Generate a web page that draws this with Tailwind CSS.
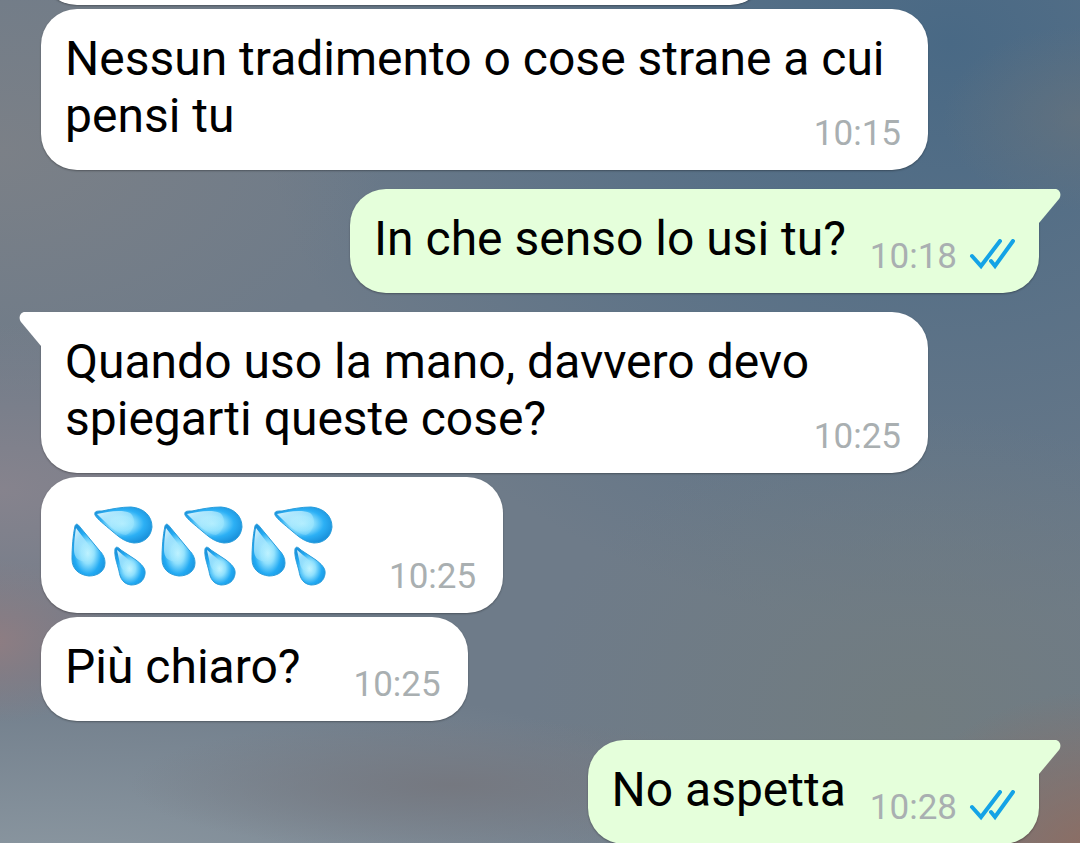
<!DOCTYPE html>
<html lang="it">
<head>
<meta charset="utf-8">
<meta name="viewport" content="width=device-width, initial-scale=1">
<title>Chat</title>
<script src="https://cdn.jsdelivr.net/npm/@tailwindcss/browser@4"></script>
</head>
<body class="min-h-screen overflow-hidden bg-[#6e7b89] font-['Roboto',sans-serif] text-black bg-[radial-gradient(ellipse_at_100%_14%,#6c747a90_0%,#6c747a00_9%),radial-gradient(ellipse_at_102%_102%,#8f6c60_0%,#8f6c6000_14%),radial-gradient(ellipse_at_-1%_76%,#8f7d82_0%,#8f7d8200_9%),radial-gradient(ellipse_30%_8%_at_42%_93%,#757880_0%,#75788000_100%),radial-gradient(ellipse_70%_26%_at_5%_105%,#8e9aa3_0%,#8e9aa300_100%),radial-gradient(ellipse_at_0%_58%,#86838d_0%,#86838d00_24%),radial-gradient(ellipse_at_85%_85%,#717c80_0%,#717c8000_30%),radial-gradient(ellipse_at_0%_18%,#7b8087_0%,#7b808700_25%),radial-gradient(ellipse_at_88%_5%,#496985_0%,#51698200_52%)]">
<!-- Shapes shared by the messages -->
<svg class="absolute size-0" aria-hidden="true">
  <defs>
    <radialGradient id="water-top" cx="0.48" cy="0.46" r="0.56">
      <stop offset="0" stop-color="#b5effe"/>
      <stop offset="0.35" stop-color="#8fe0fd"/>
      <stop offset="0.68" stop-color="#2cb0f5"/>
      <stop offset="1" stop-color="#1b93dd"/>
    </radialGradient>
    <radialGradient id="water" cx="0.48" cy="0.56" r="0.58">
      <stop offset="0" stop-color="#c9f6ff"/>
      <stop offset="0.35" stop-color="#8fe0fd"/>
      <stop offset="0.7" stop-color="#22aaf3"/>
      <stop offset="1" stop-color="#1b93dd"/>
    </radialGradient>
    <linearGradient id="shine" x1="0" y1="0" x2="0.7" y2="0.8">
      <stop offset="0" stop-color="#e4f9ff"/>
      <stop offset="1" stop-color="#a5e9fe" stop-opacity="0.3"/>
    </linearGradient>
    <symbol id="drops" viewBox="-1 -2 90 90">
      <g stroke="#2a9edc" stroke-width="1">
        <path fill="url(#water-top)" d="M26 16C25 12 28 12 33 12C43 10 52 8 62 8C75 9 83 17 83 28C82 38 75 44 65 44C55 43 49 37 43 32C36 26 28 20 26 16Z"/>
        <path fill="url(#water)" d="M6 27C7 24 9 25 11 28L30 51C34 55 36 59 36 64C36 72 29 77 20 77C10 76 3 70 3 60C3 49 4 36 6 27Z"/>
        <path fill="url(#water)" d="M46 50C47 47 49 48 52 51L67 61C72 65 77 69 76 75C75 82 70 86 62 86C54 85 51 79 50 72C48 64 45 57 46 50Z"/>
      </g>
      <g fill="url(#shine)">
        <path d="M28 15C38 13 52 10 61 14C68 19 65 33 57 36C49 36 37 24 28 15Z"/>
        <path d="M7 29L23 50C27 55 24 61 17 62C9 63 5 58 5 51C5 43 6 35 7 29Z"/>
        <path d="M48 51L60 61C65 65 64 70 60 71C54 73 52 69 51 65Z"/>
      </g>
    </symbol>
    <symbol id="ticks" viewBox="0 0 46 36">
      <path d="M3 17L12 27L31 2M22 22L26 27L44 2" fill="none" stroke="#14a3e6" stroke-width="4" stroke-linejoin="miter" stroke-linecap="round"/>
    </symbol>
    <symbol id="tail" viewBox="0 0 22 34">
      <path d="M0 0H16C21 0 23 6 20 10L0 34Z"/>
    </symbol>
  </defs>
</svg>
<main class="flex flex-col items-start gap-1 px-[41px]">
  <div class="-mt-[67px] h-[72px] w-full max-w-[725px] rounded-[36px] bg-white shadow-[0_1px_2px_#00000050]"></div>

  <article class="grid w-full max-w-[887px] rounded-[36px] bg-white pt-[21px] pr-[27px] pb-[26px] pl-6 shadow-[0_1px_2px_#00000050]">
    <p class="col-start-1 row-start-1 text-[48px] leading-[57px]">Nessun tradimento o cose strane a cui pensi tu</p>
    <time class="col-start-1 row-start-1 -mb-2 self-end justify-self-end text-[35px] leading-9 text-[#a9afb1]">10:15</time>
  </article>

  <article class="relative mt-[15px] flex items-end gap-6 self-end rounded-[36px] rounded-tr-none bg-[#e5ffdb] px-6 pt-[21px] pb-[26px] shadow-[0_1px_2px_#00000050]">
    <svg class="absolute top-0 left-full h-[34px] w-[22px] fill-[#e5ffdb]" aria-hidden="true"><use href="#tail"/></svg>
    <p class="text-[48px] leading-[57px]">In che senso lo usi tu?</p>
    <div class="-mb-2 flex items-center gap-3">
      <time class="text-[35px] leading-9 text-[#a9afb1]">10:18</time>
      <svg class="h-9 w-[46px]" role="img" aria-label="Letto"><use href="#ticks"/></svg>
    </div>
  </article>

  <article class="relative mt-[15px] grid w-full max-w-[887px] rounded-[36px] rounded-tl-none bg-white pt-[21px] pr-[27px] pb-[26px] pl-6 shadow-[0_1px_2px_#00000050]">
    <svg class="absolute top-0 right-full h-[34px] w-[22px] -scale-x-100 fill-white" aria-hidden="true"><use href="#tail"/></svg>
    <p class="col-start-1 row-start-1 text-[48px] leading-[57px]">Quando uso la mano, davvero devo spiegarti queste cose?</p>
    <time class="col-start-1 row-start-1 -mb-2 self-end justify-self-end text-[35px] leading-9 text-[#a9afb1]">10:25</time>
  </article>

  <article class="flex items-end gap-[51px] rounded-[36px] bg-white pt-5 pr-[27px] pb-[26px] pl-[27px] shadow-[0_1px_2px_#00000050]">
    <div class="flex" role="img" aria-label="Gocce di sudore">
      <svg class="size-[90px]"><use href="#drops"/></svg>
      <svg class="size-[90px]"><use href="#drops"/></svg>
      <svg class="size-[90px]"><use href="#drops"/></svg>
    </div>
    <time class="-mb-2 text-[35px] leading-9 text-[#a9afb1]">10:25</time>
  </article>

  <article class="flex items-end gap-[53px] rounded-[36px] bg-white pt-[21px] pr-[27px] pb-[26px] pl-6 shadow-[0_1px_2px_#00000050]">
    <p class="text-[48px] leading-[57px]">Più chiaro?</p>
    <time class="-mb-2 text-[35px] leading-9 text-[#a9afb1]">10:25</time>
  </article>

  <article class="relative mt-[15px] flex items-end gap-6 self-end rounded-[36px] rounded-tr-none bg-[#e5ffdb] px-6 pt-[21px] pb-[26px] shadow-[0_1px_2px_#00000050]">
    <svg class="absolute top-0 left-full h-[34px] w-[22px] fill-[#e5ffdb]" aria-hidden="true"><use href="#tail"/></svg>
    <p class="text-[48px] leading-[57px]">No aspetta</p>
    <div class="-mb-2 flex items-center gap-3">
      <time class="text-[35px] leading-9 text-[#a9afb1]">10:28</time>
      <svg class="h-9 w-[46px]" role="img" aria-label="Letto"><use href="#ticks"/></svg>
    </div>
  </article>
</main>
</body>
</html>
